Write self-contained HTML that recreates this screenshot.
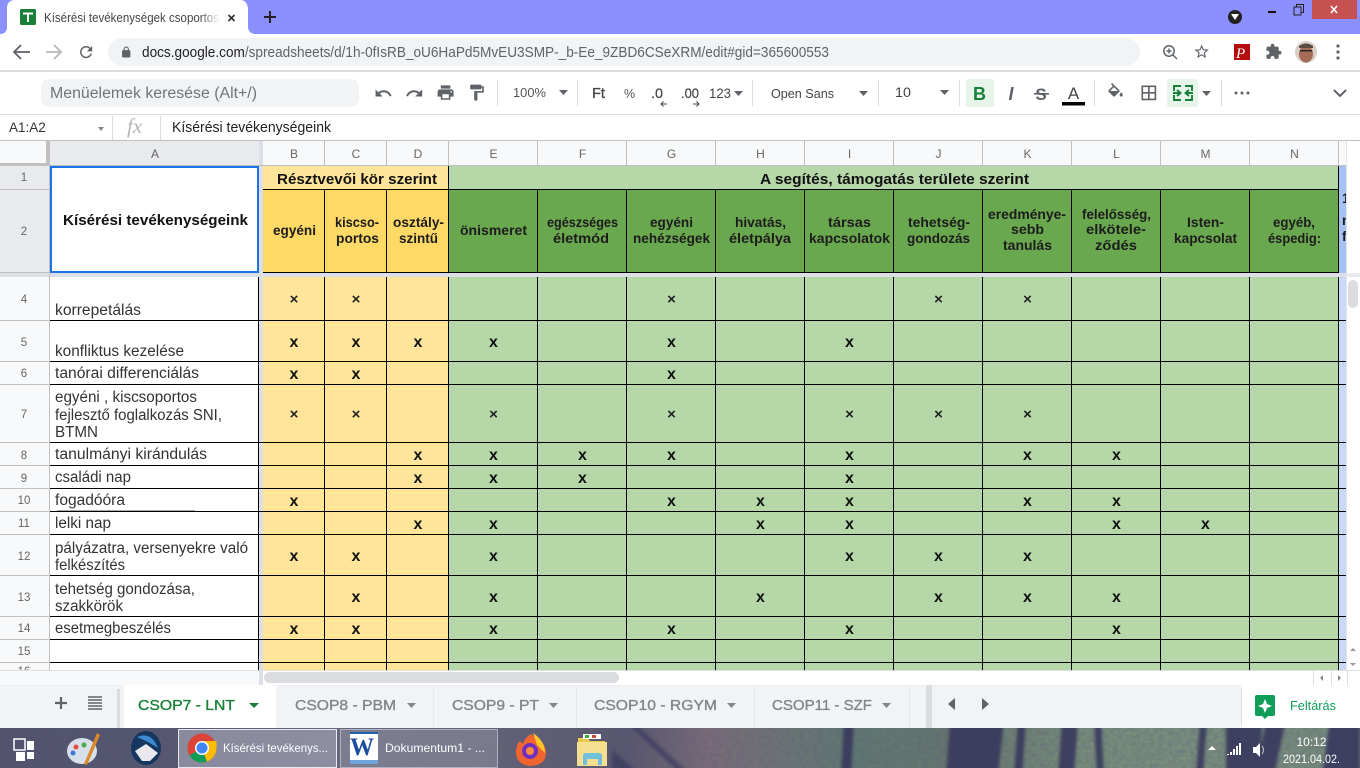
<!DOCTYPE html>
<html lang="hu"><head><meta charset="utf-8"><title>Kísérési tevékenységek csoportos</title>
<style>
html,body{margin:0;padding:0;width:1360px;height:768px;overflow:hidden;background:#fff}
svg{display:block;position:absolute;left:0;top:0}
text{font-family:"Liberation Sans",Arial,sans-serif}
.a{font-size:15.5px;fill:#333}
.h{font-size:13.5px;font-weight:bold;fill:#1c1c1c}
.t{font-size:15px;font-weight:bold;fill:#111}
.x{font-size:16px;font-weight:bold;fill:#111;text-anchor:middle}
.s{font-size:15px;font-weight:bold;fill:#222;text-anchor:middle}
.c{font-size:12px;fill:#666;text-anchor:middle}
.r{font-size:11.5px;fill:#666;text-anchor:middle}
.sh{font-size:15px;fill:#80868b;stroke:#80868b;stroke-width:.35px}
.w{fill:#fff;font-size:12px}
</style></head><body>
<svg width="1360" height="768" viewBox="0 0 1360 768" xmlns="http://www.w3.org/2000/svg">
<defs>
<linearGradient id="fade"><stop offset="0" stop-color="#fff" stop-opacity="0"/><stop offset="1" stop-color="#fff"/></linearGradient>
<linearGradient id="bg" x1="0" x2="1" y1="0" y2="0">
<stop offset="0" stop-color="#50516a"/><stop offset=".13" stop-color="#55566e"/><stop offset=".26" stop-color="#6a6c80"/><stop offset=".42" stop-color="#5e5c70"/><stop offset=".46" stop-color="#56556c"/><stop offset=".52" stop-color="#7b6c76"/><stop offset=".57" stop-color="#6f7574"/><stop offset=".62" stop-color="#5f7a70"/><stop offset=".7" stop-color="#64786c"/><stop offset=".8" stop-color="#78907a"/><stop offset=".88" stop-color="#7a917c"/><stop offset="1" stop-color="#758c7a"/>
</linearGradient>
<filter id="n" x="0" y="0" width="100%" height="100%"><feTurbulence type="fractalNoise" baseFrequency=".22 .28" numOctaves="2" seed="4"/><feColorMatrix values="0 0 0 0 .1 0 0 0 0 .1 0 0 0 0 .2 0 0 0 .6 -.12"/></filter>
<filter id="bl" x="-5%" y="-20%" width="110%" height="140%"><feGaussianBlur stdDeviation="1.600"/></filter>
<clipPath id="tk"><rect x="0" y="728" width="1360" height="40"/></clipPath>
</defs>
<rect width="1360" height="768" fill="#fff"/>
<!-- tab strip -->
<rect width="1360" height="34" fill="#8c90ff"/>
<path d="M0 34C5 34 7 31 7 27V8C7 3 10 0 15 0H240C245 0 247 3 248 8V27C248 31 251 34 256 34Z" fill="#fff"/>
<rect x="20" y="9" width="16" height="16" rx="1.500" fill="#188038"/>
<path d="M23 12.500H33V14.500H29V22H27V14.500H23Z" fill="#fff"/>
<text x="44" y="22" font-size="12.500" fill="#444" textLength="175" lengthAdjust="spacingAndGlyphs">Kísérési tevékenységek csoportos</text>
<rect x="200" y="8" width="20" height="20" fill="url(#fade)"/>
<path d="M228.500 19l6 6m0-6l-6 6" transform="translate(0,-4)" stroke="#333" stroke-width="1.700"/>
<path d="M270 11v12M264 17h12" stroke="#222" stroke-width="2"/>
<circle cx="1235" cy="17" r="7" fill="#222"/><path d="M1231 14h8l-4 6z" fill="#fff"/>
<rect x="1268" y="11" width="8" height="2" fill="#111"/>
<rect x="1294" y="7" width="7" height="8" fill="none" stroke="#222" stroke-width="1"/><path d="M1296.500 7V4.500H1303.500V12.500H1301.500" fill="none" stroke="#222" stroke-width="1"/>
<rect x="1312" y="0" width="45" height="19" fill="#c75050"/>
<path d="M1331 6l6 7m0-7l-6 7" stroke="#fff" stroke-width="1.600"/>
<!-- address row -->
<rect x="108" y="38" width="1032" height="28" rx="14" fill="#f1f3f4"/>
<path d="M30 52H14M21 45l-7 7 7 7" fill="none" stroke="#5f6368" stroke-width="1.800"/>
<path d="M46 52H61M54 45l7 7-7 7" fill="none" stroke="#b5b7ba" stroke-width="1.800"/>
<g transform="translate(77,43) scale(.76)"><path fill="#5f6368" d="M17.650 6.350C16.200 4.900 14.210 4 12 4c-4.420 0-7.990 3.580-7.990 8s3.570 8 7.990 8c3.730 0 6.840-2.550 7.730-6h-2.080c-.82 2.330-3.040 4-5.650 4-3.310 0-6-2.690-6-6s2.690-6 6-6c1.660 0 3.140.69 4.220 1.780L13 11h7V4l-2.350 2.350z"/></g>
<g transform="translate(120,46) scale(.52)"><path fill="#5f6368" d="M18 8h-1V6c0-2.760-2.240-5-5-5S7 3.240 7 6v2H6c-1.100 0-2 .9-2 2v10c0 1.100.9 2 2 2h12c1.100 0 2-.9 2-2V10c0-1.100-.9-2-2-2zM9 6c0-1.660 1.340-3 3-3s3 1.340 3 3v2H9V6z"/></g>
<text x="142" y="57" font-size="14.500" fill="#5f6368" textLength="687" lengthAdjust="spacingAndGlyphs"><tspan fill="#202124">docs.google.com</tspan>/spreadsheets/d/1h-0fIsRB_oU6HaPd5MvEU3SMP-_b-Ee_9ZBD6CSeXRM/edit#gid=365600553</text>
<circle cx="1169" cy="51" r="5.200" fill="none" stroke="#5f6368" stroke-width="1.500"/><path d="M1173 55l4 4M1166.500 51h5M1169 48.500v5" stroke="#5f6368" stroke-width="1.400"/>
<g transform="translate(1193,43) scale(.72)"><path fill="#5f6368" d="M22 9.240l-7.190-.62L12 2 9.190 8.630 2 9.240l5.460 4.730L5.820 21 12 17.270 18.180 21l-1.630-7.030L22 9.240zM12 15.400l-3.760 2.270 1-4.280-3.320-2.880 4.380-.38L12 6.100l1.710 4.040 4.380.38-3.320 2.880 1 4.280L12 15.400z"/></g>
<rect x="1234" y="44" width="16" height="16" fill="#b50d0d"/><text x="1236" y="58" font-size="15" font-style="italic" style="font-family:'Liberation Serif',serif" fill="#fff">P</text>
<g transform="translate(1265,43) scale(.72)"><path fill="#5f6368" d="M20.500 11H19V7c0-1.100-.9-2-2-2h-4V3.500C13 2.120 11.880 1 10.500 1S8 2.120 8 3.500V5H4c-1.100 0-1.990.9-1.990 2v3.800H3.500c1.490 0 2.700 1.210 2.700 2.700s-1.210 2.700-2.700 2.700H2V20c0 1.100.9 2 2 2h3.800v-1.500c0-1.490 1.210-2.700 2.700-2.700 1.490 0 2.700 1.210 2.700 2.700V22H17c1.100 0 2-.9 2-2v-4h1.500c1.380 0 2.500-1.120 2.500-2.500S21.880 11 20.500 11z"/></g>
<ellipse cx="1306" cy="52" rx="11" ry="11" fill="#d8cfc6"/><ellipse cx="1306" cy="54" rx="7" ry="8.500" fill="#a46c56"/><path d="M1299 46q7-5 14 0v2h-14z" fill="#5a4a44"/><rect x="1300" y="50" width="12" height="1.500" fill="#2a2a2a"/>
<circle cx="1338" cy="46" r="1.600" fill="#5f6368"/><circle cx="1338" cy="52" r="1.600" fill="#5f6368"/><circle cx="1338" cy="58" r="1.600" fill="#5f6368"/>
<rect y="70" width="1360" height="2" fill="#dcdce0"/>
<!-- toolbar -->
<rect x="41" y="79" width="318" height="28" rx="8" fill="#f1f3f4"/>
<text x="50" y="98" font-size="15.500" fill="#70757a" textLength="207" lengthAdjust="spacingAndGlyphs">Menüelemek keresése (Alt+/)</text>
<g fill="#5f6368">
<path transform="translate(374,84) scale(.78)" d="M12.500 8c-2.650 0-5.050.99-6.900 2.600L2 7v9h9l-3.620-3.620c1.390-1.160 3.160-1.880 5.120-1.880 3.540 0 6.550 2.310 7.600 5.500l2.370-.78C21.080 11.030 17.150 8 12.500 8z"/>
<path transform="translate(405,84) scale(.78)" d="M18.400 10.600C16.550 8.990 14.150 8 11.500 8c-4.650 0-8.580 3.030-9.960 7.220L3.900 16c1.050-3.190 4.050-5.500 7.600-5.500 1.950 0 3.730.72 5.120 1.880L13 16h9V7l-3.600 3.600z"/>
<path transform="translate(436,83) scale(.8)" d="M19 8H5c-1.660 0-3 1.340-3 3v6h4v4h12v-4h4v-6c0-1.660-1.340-3-3-3zm-3 11H8v-5h8v5zm3-7c-.55 0-1-.45-1-1s.45-1 1-1 1 .45 1 1-.45 1-1 1zm-1-9H6v4h12V3z"/>
<path transform="translate(467,83) scale(.8)" d="M18 4V3c0-.55-.45-1-1-1H5c-.55 0-1 .45-1 1v4c0 .55.45 1 1 1h12c.55 0 1-.45 1-1V6h1v4H9v11c0 .55.45 1 1 1h2c.55 0 1-.45 1-1v-9h8V4h-3z"/>
<path d="M559 90h9l-4.500 5zM859 91h9l-4.500 5zM940 90h9l-4.500 5zM1202 91h9l-4.500 5zM734 91h9l-4.500 5z"/>
</g>
<g fill="#dadce0"><rect x="497" y="80" width="1" height="26"/><rect x="577" y="80" width="1" height="26"/><rect x="752" y="80" width="1" height="26"/><rect x="878" y="80" width="1" height="26"/><rect x="959" y="80" width="1" height="26"/><rect x="1094" y="80" width="1" height="26"/><rect x="1221" y="80" width="1" height="26"/></g>
<text x="513" y="97" font-size="13" fill="#555" textLength="33" lengthAdjust="spacingAndGlyphs">100%</text>
<text x="592" y="98" font-size="14.500" fill="#444" stroke="#444" stroke-width=".3" textLength="13" lengthAdjust="spacingAndGlyphs">Ft</text>
<text x="624" y="98" font-size="12.500" fill="#555">%</text>
<text x="651" y="98" font-size="14" fill="#444" stroke="#444" stroke-width=".2" textLength="12" lengthAdjust="spacingAndGlyphs">.0</text>
<path d="M667 104h-6m2.500-2.500l-2.500 2.500 2.500 2.500" stroke="#444" fill="none"/>
<text x="681" y="98" font-size="14" fill="#444" stroke="#444" stroke-width=".2" textLength="18" lengthAdjust="spacingAndGlyphs">.00</text>
<path d="M693 104h6m-2.500-2.500l2.500 2.500-2.500 2.500" stroke="#444" fill="none"/>
<text x="709" y="98" font-size="13.500" fill="#444" textLength="22" lengthAdjust="spacingAndGlyphs">123</text>
<text x="771" y="98" font-size="13" fill="#444" textLength="63" lengthAdjust="spacingAndGlyphs">Open Sans</text>
<text x="895" y="97" font-size="13.500" fill="#444" textLength="16" lengthAdjust="spacingAndGlyphs">10</text>
<rect x="966" y="79" width="28" height="28" rx="2" fill="#e6f4ea"/>
<text x="979.500" y="100" font-size="18" font-weight="bold" fill="#188038" text-anchor="middle">B</text>
<text x="1011" y="100" font-size="18" font-weight="bold" font-style="italic" fill="#5f6368" text-anchor="middle">I</text>
<text x="1041" y="100" font-size="17" font-weight="bold" fill="#5f6368" text-anchor="middle">S</text><rect x="1034" y="93" width="15" height="1.600" fill="#5f6368"/>
<text x="1073.500" y="99" font-size="17" fill="#444" text-anchor="middle">A</text><rect x="1062" y="102" width="23" height="3.500" fill="#000"/>
<g transform="translate(1106,83) scale(.8)"><path fill="#5f6368" d="M16.560 8.940L7.620 0 6.210 1.410l2.380 2.380-5.150 5.150c-.59.59-.59 1.540 0 2.120l5.500 5.500c.29.29.68.44 1.060.44s.77-.15 1.060-.44l5.500-5.500c.59-.58.59-1.530 0-2.120zM5.210 10L10 5.210 14.790 10H5.210zM19 11.500s-2 2.170-2 3.500c0 1.100.9 2 2 2s2-.9 2-2c0-1.330-2-3.500-2-3.500z"/></g>
<g transform="translate(1139,83) scale(.82)"><path fill="#5f6368" d="M3 3v18h18V3H3zm8 16H5v-6h6v6zm0-8H5V5h6v6zm8 8h-6v-6h6v6zm0-8h-6V5h6v6z"/></g>
<rect x="1167" y="79" width="31" height="28" rx="2" fill="#e6f4ea"/>
<path d="M1174 91V86H1181M1185 86H1192V91M1174 95V100H1181M1185 100H1192V95M1173 93H1180M1177 90L1180.500 93 1177 96M1193 93H1186M1189 90L1185.500 93 1189 96" stroke="#188038" stroke-width="1.900" fill="none"/>
<circle cx="1236" cy="93" r="1.500" fill="#5f6368"/><circle cx="1242" cy="93" r="1.500" fill="#5f6368"/><circle cx="1248" cy="93" r="1.500" fill="#5f6368"/>
<path d="M1334 90l6 6 6-6" stroke="#5f6368" stroke-width="2" fill="none"/>
<rect y="114" width="1360" height="1" fill="#dadce0"/>
<!-- formula bar -->
<text x="9" y="132" font-size="13.500" fill="#333">A1:A2</text>
<path d="M98 127h6l-3 4z" fill="#888"/>
<rect x="112" y="116" width="1" height="24" fill="#dadce0"/><rect x="160" y="116" width="1" height="24" fill="#dadce0"/>
<text x="127" y="133" font-size="21" font-style="italic" fill="#b5b5b5" style="font-family:'Liberation Serif',serif">fx</text>
<text x="172" y="132" font-size="14.500" fill="#222" textLength="159" lengthAdjust="spacingAndGlyphs">Kísérési tevékenységeink</text>
<rect y="140" width="1360" height="1" fill="#c0c0c0"/>
<!-- headers bg -->
<rect y="141" width="1346" height="25" fill="#f8f9fa"/>
<rect y="166" width="50" height="504" fill="#f8f9fa"/>
<rect x="50" y="141" width="209" height="25" fill="#e8eaed"/>
<rect y="166" width="50" height="107" fill="#e8eaed"/>
<rect x="0" y="141" width="46" height="22" fill="#f8f9fa"/>
<rect x="0" y="163" width="50" height="3" fill="#c0c0c0"/><rect x="46" y="141" width="4" height="25" fill="#c0c0c0"/>
<!-- main fills -->
<rect x="50" y="166" width="209" height="504" fill="#fff"/>
<rect x="263" y="166" width="186" height="24" fill="#ffe599"/>
<rect x="449" y="166" width="890" height="24" fill="#b6d7a8"/>
<rect x="263" y="190" width="186" height="83" fill="#ffd966"/>
<rect x="449" y="190" width="890" height="83" fill="#6aa84f"/>
<rect x="263" y="277" width="186" height="393" fill="#ffe599"/>
<rect x="449" y="277" width="890" height="393" fill="#b6d7a8"/>
<rect x="1339" y="166" width="7" height="107" fill="#a4c2f4"/>
<rect x="1339" y="277" width="7" height="393" fill="#c9daf8"/>
<!-- freeze bars -->
<rect x="259" y="141" width="4" height="529" fill="#dcdfe6"/>
<rect y="273" width="1346" height="4" fill="#dcdfe6"/>
<!-- header grid -->
<g fill="#c0c0c0">
<rect x="324" y="141" width="1" height="25"/><rect x="386" y="141" width="1" height="25"/><rect x="448" y="141" width="1" height="25"/><rect x="537" y="141" width="1" height="25"/><rect x="626" y="141" width="1" height="25"/><rect x="715" y="141" width="1" height="25"/><rect x="804" y="141" width="1" height="25"/><rect x="893" y="141" width="1" height="25"/><rect x="982" y="141" width="1" height="25"/><rect x="1071" y="141" width="1" height="25"/><rect x="1160" y="141" width="1" height="25"/><rect x="1249" y="141" width="1" height="25"/><rect x="1338" y="141" width="1" height="25"/>
<rect y="165" width="1296" height="1" x="50"/>
<rect x="0" y="189" width="50" height="1"/><rect x="0" y="272" width="50" height="1"/><rect x="0" y="320" width="50" height="1"/><rect x="0" y="361" width="50" height="1"/><rect x="0" y="384" width="50" height="1"/><rect x="0" y="442" width="50" height="1"/><rect x="0" y="465" width="50" height="1"/><rect x="0" y="488" width="50" height="1"/><rect x="0" y="511" width="50" height="1"/><rect x="0" y="534" width="50" height="1"/><rect x="0" y="575" width="50" height="1"/><rect x="0" y="616" width="50" height="1"/><rect x="0" y="639" width="50" height="1"/><rect x="0" y="662" width="50" height="1"/>
<rect x="49" y="166" width="1" height="504"/>
</g>
<text class="c" x="155" y="158">A</text><text class="c" x="294" y="158">B</text><text class="c" x="356" y="158">C</text><text class="c" x="418" y="158">D</text><text class="c" x="493.500" y="158">E</text><text class="c" x="582.500" y="158">F</text><text class="c" x="671.500" y="158">G</text><text class="c" x="760.500" y="158">H</text><text class="c" x="849.500" y="158">I</text><text class="c" x="938.500" y="158">J</text><text class="c" x="1027.500" y="158">K</text><text class="c" x="1116.500" y="158">L</text><text class="c" x="1205.500" y="158">M</text><text class="c" x="1294.500" y="158">N</text>
<text class="r" x="24" y="181">1</text><text class="r" x="24" y="235">2</text><text class="r" x="24" y="303">4</text><text class="r" x="24" y="346">5</text><text class="r" x="24" y="377">6</text><text class="r" x="24" y="418">7</text><text class="r" x="24" y="459">8</text><text class="r" x="24" y="482">9</text><text class="r" x="24" y="504">10</text><text class="r" x="24" y="527">11</text><text class="r" x="24" y="560">12</text><text class="r" x="24" y="601">13</text><text class="r" x="24" y="632">14</text><text class="r" x="24" y="655">15</text><text class="r" x="24" y="675">16</text>
<!-- grid lines -->
<g fill="#000">
<rect x="50" y="320" width="1296" height="1"/><rect x="50" y="361" width="1296" height="1"/><rect x="50" y="384" width="1296" height="1"/><rect x="50" y="442" width="1296" height="1"/><rect x="50" y="465" width="1296" height="1"/><rect x="50" y="488" width="1296" height="1"/><rect x="50" y="511" width="1296" height="1"/><rect x="50" y="534" width="1296" height="1"/><rect x="50" y="575" width="1296" height="1"/><rect x="50" y="616" width="1296" height="1"/><rect x="50" y="639" width="1296" height="1"/><rect x="50" y="662" width="1296" height="1"/>
<rect x="263" y="189" width="1076" height="1"/><rect x="263" y="272" width="1076" height="1"/>
<rect x="258" y="277" width="1" height="393"/>
<rect x="324" y="190" width="1" height="83"/><rect x="386" y="190" width="1" height="83"/><rect x="448" y="166" width="1" height="107"/><rect x="537" y="190" width="1" height="83"/><rect x="626" y="190" width="1" height="83"/><rect x="715" y="190" width="1" height="83"/><rect x="804" y="190" width="1" height="83"/><rect x="893" y="190" width="1" height="83"/><rect x="982" y="190" width="1" height="83"/><rect x="1071" y="190" width="1" height="83"/><rect x="1160" y="190" width="1" height="83"/><rect x="1249" y="190" width="1" height="83"/><rect x="1338" y="166" width="1" height="107"/>
<rect x="324" y="277" width="1" height="393"/><rect x="386" y="277" width="1" height="393"/><rect x="448" y="277" width="1" height="393"/><rect x="537" y="277" width="1" height="393"/><rect x="626" y="277" width="1" height="393"/><rect x="715" y="277" width="1" height="393"/><rect x="804" y="277" width="1" height="393"/><rect x="893" y="277" width="1" height="393"/><rect x="982" y="277" width="1" height="393"/><rect x="1071" y="277" width="1" height="393"/><rect x="1160" y="277" width="1" height="393"/><rect x="1249" y="277" width="1" height="393"/><rect x="1338" y="277" width="1" height="393"/>
</g>
<rect x="57" y="510" width="138" height="1" fill="#aaa"/>
<!-- selection -->
<rect x="51" y="167" width="207" height="105" fill="#fff" stroke="#1a73e8" stroke-width="2"/>
<!-- titles -->
<text class="t" x="63" y="225" textLength="185" lengthAdjust="spacingAndGlyphs">Kísérési tevékenységeink</text>
<text class="t" x="277" y="184" textLength="160" lengthAdjust="spacingAndGlyphs">Résztvevői kör szerint</text>
<text class="t" x="760" y="184" textLength="269" lengthAdjust="spacingAndGlyphs">A segítés, támogatás területe szerint</text>
<!-- column headers -->
<text class="h" x="273" y="235" lengthAdjust="spacingAndGlyphs" textLength="43">egyéni</text>
<text class="h" x="335" y="227" lengthAdjust="spacingAndGlyphs" textLength="44">kiscso-</text><text class="h" x="336" y="243" lengthAdjust="spacingAndGlyphs" textLength="43">portos</text>
<text class="h" x="393" y="227" lengthAdjust="spacingAndGlyphs" textLength="51">osztály-</text><text class="h" x="399" y="243" lengthAdjust="spacingAndGlyphs" textLength="39">szintű</text>
<text class="h" x="460" y="235" lengthAdjust="spacingAndGlyphs" textLength="67">önismeret</text>
<text class="h" x="547" y="227" lengthAdjust="spacingAndGlyphs" textLength="71">egészséges</text><text class="h" x="553" y="243" lengthAdjust="spacingAndGlyphs" textLength="56">életmód</text>
<text class="h" x="650" y="227" lengthAdjust="spacingAndGlyphs" textLength="43">egyéni</text><text class="h" x="633" y="243" lengthAdjust="spacingAndGlyphs" textLength="77">nehézségek</text>
<text class="h" x="735" y="227" lengthAdjust="spacingAndGlyphs" textLength="51">hivatás,</text><text class="h" x="729" y="243" lengthAdjust="spacingAndGlyphs" textLength="62">életpálya</text>
<text class="h" x="828" y="227" lengthAdjust="spacingAndGlyphs" textLength="43">társas</text><text class="h" x="809" y="243" lengthAdjust="spacingAndGlyphs" textLength="81">kapcsolatok</text>
<text class="h" x="908" y="227" lengthAdjust="spacingAndGlyphs" textLength="62">tehetség-</text><text class="h" x="907" y="243" lengthAdjust="spacingAndGlyphs" textLength="63">gondozás</text>
<text class="h" x="988" y="219" lengthAdjust="spacingAndGlyphs" textLength="78">eredménye-</text><text class="h" x="1011" y="234" lengthAdjust="spacingAndGlyphs" textLength="33">sebb</text><text class="h" x="1003" y="250" lengthAdjust="spacingAndGlyphs" textLength="49">tanulás</text>
<text class="h" x="1082" y="219" lengthAdjust="spacingAndGlyphs" textLength="69">felelősség,</text><text class="h" x="1086" y="234" lengthAdjust="spacingAndGlyphs" textLength="60">elkötele-</text><text class="h" x="1095" y="250" lengthAdjust="spacingAndGlyphs" textLength="42">ződés</text>
<text class="h" x="1187" y="227" lengthAdjust="spacingAndGlyphs" textLength="37">Isten-</text><text class="h" x="1174" y="243" lengthAdjust="spacingAndGlyphs" textLength="63">kapcsolat</text>
<text class="h" x="1273" y="227" lengthAdjust="spacingAndGlyphs" textLength="42">egyéb,</text><text class="h" x="1268" y="243" lengthAdjust="spacingAndGlyphs" textLength="53">éspedig:</text>
<text class="h" x="1342" y="203">1</text><text class="h" x="1342" y="225">n</text><text class="h" x="1342" y="241">f</text>
<!-- col A labels -->
<text class="a" x="55" y="315" lengthAdjust="spacingAndGlyphs" textLength="86">korrepetálás</text>
<text class="a" x="55" y="356" lengthAdjust="spacingAndGlyphs" textLength="129">konfliktus kezelése</text>
<text class="a" x="55" y="378" lengthAdjust="spacingAndGlyphs" textLength="144">tanórai differenciálás</text>
<text class="a" x="55" y="402" lengthAdjust="spacingAndGlyphs" textLength="142">egyéni , kiscsoportos</text>
<text class="a" x="55" y="420" lengthAdjust="spacingAndGlyphs" textLength="167">fejlesztő foglalkozás SNI,</text>
<text class="a" x="55" y="437" lengthAdjust="spacingAndGlyphs" textLength="43">BTMN</text>
<text class="a" x="55" y="459" lengthAdjust="spacingAndGlyphs" textLength="152">tanulmányi kirándulás</text>
<text class="a" x="55" y="482" lengthAdjust="spacingAndGlyphs" textLength="76">családi nap</text>
<text class="a" x="55" y="505" lengthAdjust="spacingAndGlyphs" textLength="70">fogadóóra</text>
<text class="a" x="55" y="528" lengthAdjust="spacingAndGlyphs" textLength="56">lelki nap</text>
<text class="a" x="55" y="553" lengthAdjust="spacingAndGlyphs" textLength="193">pályázatra, versenyekre való</text>
<text class="a" x="55" y="570" lengthAdjust="spacingAndGlyphs" textLength="70">felkészítés</text>
<text class="a" x="55" y="594" lengthAdjust="spacingAndGlyphs" textLength="140">tehetség gondozása,</text>
<text class="a" x="55" y="611" lengthAdjust="spacingAndGlyphs" textLength="68">szakkörök</text>
<text class="a" x="55" y="633" lengthAdjust="spacingAndGlyphs" textLength="116">esetmegbeszélés</text>
<!-- marks -->
<text class="s" x="294 356 671.500 938.500 1027.500" y="304">×××××</text>
<text class="x" x="294 356 418 493.500 671.500 849.500" y="347">xxxxxx</text>
<text class="x" x="294 356 671.500" y="379">xxx</text>
<text class="s" x="294 356 493.500 671.500 849.500 938.500 1027.500" y="419">×××××××</text>
<text class="x" x="418 493.500 582.500 671.500 849.500 1027.500 1116.500" y="460">xxxxxxx</text>
<text class="x" x="418 493.500 582.500 849.500" y="483">xxxx</text>
<text class="x" x="294 671.500 760.500 849.500 1027.500 1116.500" y="506">xxxxxx</text>
<text class="x" x="418 493.500 760.500 849.500 1116.500 1205.500" y="529">xxxxxx</text>
<text class="x" x="294 356 493.500 849.500 938.500 1027.500" y="561">xxxxxx</text>
<text class="x" x="356 493.500 760.500 938.500 1027.500 1116.500" y="602">xxxxxx</text>
<text class="x" x="294 356 493.500 671.500 849.500 1116.500" y="634">xxxxxx</text>
<!-- v scrollbar -->
<rect x="1346" y="141" width="14" height="529" fill="#fff"/><rect x="1346" y="141" width="1" height="529" fill="#e4e4e4"/>
<rect x="1346" y="273" width="14" height="4" fill="#e8eaed"/>
<rect x="1348" y="280" width="10" height="28" rx="5" fill="#dadce0"/>
<path d="M1350 651l3-3 3 3zM1350 663l3 3 3-3z" fill="#999"/>
<!-- h scrollbar -->
<rect x="0" y="670" width="1360" height="15" fill="#fff"/><rect y="670" width="1360" height="1" fill="#e0e0e0"/>
<rect x="0" y="671" width="259" height="14" fill="#f8f9fa"/>
<rect x="259" y="671" width="4" height="14" fill="#dcdfe6"/>
<rect x="264" y="672" width="355" height="11" rx="5.500" fill="#dadce0"/>
<rect x="1313" y="671" width="1" height="14" fill="#e0e0e0"/><rect x="1331" y="671" width="1" height="14" fill="#e0e0e0"/><rect x="1347" y="671" width="1" height="14" fill="#e0e0e0"/>
<path d="M1323 675l-3 3 3 3zM1338 675l3 3-3 3z" fill="#888"/>
<!-- sheet bar -->
<rect y="685" width="1360" height="43" fill="#f1f3f4"/>
<rect y="685" width="1360" height="1" fill="#eceef0"/>
<rect x="117" y="689" width="3" height="39" fill="#dadce0"/>
<rect x="124" y="685" width="152" height="43" fill="#fff"/>
<path d="M61 697v12M55 703h12" stroke="#5f6368" stroke-width="2.200"/>
<path d="M88 697h14M88 700h14M88 703h14M88 706h14M88 709h14" stroke="#5f6368" stroke-width="1.500"/>
<text x="138" y="710" font-size="15" fill="#188038" stroke="#188038" stroke-width=".35" textLength="97" lengthAdjust="spacingAndGlyphs">CSOP7 - LNT</text>
<path d="M249 703h10l-5 5z" fill="#188038"/>
<text class="sh" x="295" y="710" textLength="101" lengthAdjust="spacingAndGlyphs">CSOP8 - PBM</text>
<path d="M407 703h9l-4.500 5z" fill="#80868b"/>
<rect x="433" y="686" width="1" height="42" fill="#e6e8ea"/>
<text class="sh" x="452" y="710" textLength="87" lengthAdjust="spacingAndGlyphs">CSOP9 - PT</text>
<path d="M549 703h9l-4.500 5z" fill="#80868b"/>
<rect x="576" y="686" width="1" height="42" fill="#e6e8ea"/>
<text class="sh" x="594" y="710" textLength="123" lengthAdjust="spacingAndGlyphs">CSOP10 - RGYM</text>
<path d="M727 703h9l-4.500 5z" fill="#80868b"/>
<rect x="754" y="686" width="1" height="42" fill="#e6e8ea"/>
<text class="sh" x="772" y="710" textLength="100" lengthAdjust="spacingAndGlyphs">CSOP11 - SZF</text>
<path d="M882 703h9l-4.500 5z" fill="#80868b"/>
<rect x="909" y="686" width="1" height="42" fill="#e6e8ea"/>
<rect x="926" y="685" width="6" height="43" fill="#dadce0"/>
<path d="M955 698l-7 6 7 6zM982 698l7 6-7 6z" fill="#5f6368"/>
<rect x="1242" y="685" width="118" height="43" fill="#fff"/><rect x="1241" y="689" width="1" height="36" fill="#dadce0"/>
<path d="M1255 697q0-2 2-2h16q2 0 2 2v17q0 2-2 2h-5l-3 3-3-3h-5q-2 0-2-2z" fill="#0f9d58"/>
<path d="M1265 699l2 5 5 2-5 2-2 5-2-5-5-2 5-2z" fill="#fff"/>
<text x="1290" y="710" font-size="13" fill="#0f9d58" textLength="46" lengthAdjust="spacingAndGlyphs">Feltárás</text>
<!-- taskbar -->
<rect y="728" width="1360" height="40" fill="url(#bg)"/>
<rect y="728" width="1360" height="40" filter="url(#n)"/>
<g clip-path="url(#tk)"><g filter="url(#bl)">
<path d="M624 720h7l61 56h-9zM612 750l30 26h-30z" fill="#37385c" opacity=".7"/>
<path d="M950 720h54l-6 56h-52zM844 720h10l-3 56h-10zM1018 720h8l-4 56h-8zM1062 720h16l-4 56h-16zM1094 720h7l3 56h-7zM1200 720h7l-4 56h-7zM1226 720h36l-2 56h-34zM1266 720h20l-12 56h-18zM1330 720h30v56h-38z" fill="#37385c" opacity=".9"/>
</g></g>
<rect x="14" y="739" width="11" height="11" fill="none" stroke="#fff" stroke-width="1.500"/><rect x="27" y="741" width="7" height="9" fill="#fff"/><rect x="16" y="752" width="9" height="9" fill="#fff"/><rect x="27" y="752" width="7" height="7" fill="#fff"/>
<ellipse cx="82" cy="751" rx="15" ry="13" fill="#d7e0ea"/><circle cx="76" cy="747" r="2.500" fill="#e94b3c"/><circle cx="84" cy="745" r="2.500" fill="#4aa84f"/><circle cx="73" cy="753" r="2.500" fill="#3c78d8"/><path d="M97 733l-13 31 3 1 13-30z" fill="#d98a2b"/>
<ellipse cx="146" cy="748" rx="15" ry="17" fill="#16365f"/><path d="M135 751l11-7 12 9-8 8h-8z" fill="#e8e8ee"/><path d="M137 737q14-6 21 11l-10-6z" fill="#3a8ad0"/>
<rect x="178.500" y="729.500" width="158" height="38" fill="#9a9bad" fill-opacity=".75" stroke="#e8e8ee"/>
<rect x="340.500" y="729.500" width="157" height="38" fill="#8a8b9d" fill-opacity=".6" stroke="#b0b1c0"/>
<circle cx="202" cy="748" r="14.500" fill="#db4437"/><path d="M202 748L189.500 755.500A14.500 14.500 0 0 0 207 761.600Z" fill="#0f9d58"/><path d="M202 748L207 761.600A14.500 14.500 0 0 0 216.500 748V741H202Z" fill="#fbbc05"/><circle cx="202" cy="748" r="7" fill="#fff"/><circle cx="202" cy="748" r="5.500" fill="#4285f4"/>
<text class="w" x="223" y="752" textLength="105" lengthAdjust="spacingAndGlyphs">Kísérési tevékenys...</text>
<rect x="350" y="732" width="28" height="32" fill="#fff"/><rect x="350" y="732" width="28" height="2" fill="#1e5fb0"/><rect x="350" y="760" width="28" height="4" fill="#6fa3dc"/>
<text x="350" y="755" font-size="25" font-weight="bold" fill="#1b4f9e" style="font-family:'Liberation Serif',serif" textLength="24" lengthAdjust="spacingAndGlyphs">W</text>
<text class="w" x="385" y="752" textLength="100" lengthAdjust="spacingAndGlyphs">Dokumentum1 - ...</text>
<path d="M531 734q3 3 6 4 9 6 9 15 0 12-15 13-15-1-15-14 0-8 4-11l3 3q1-6 8-10z" fill="#f0652f"/><path d="M533 733q12 8 12 20l-8-8z" fill="#ffc629"/><circle cx="530" cy="751" r="8" fill="#6f2fc0"/><circle cx="530" cy="751" r="4" fill="#ff8a3c"/>
<path d="M578 738h10l2 3h15v25h-27z" fill="#e8c84f"/><rect x="577" y="742" width="30" height="24" fill="#f4df8e"/><rect x="583" y="734" width="18" height="5" fill="#fff"/><rect x="585" y="735" width="4" height="3" fill="#3aa83a"/><rect x="592" y="735" width="4" height="3" fill="#d04a3a"/><path d="M583 765v-9q0-3 3-3h13q3 0 3 3v9h-4v-6h-11v6z" fill="#6fc0dc"/>
<path d="M1208 750l4-4 4 4z" fill="#fff"/>
<path d="M1227 754h2v1h-2zM1230 752h2v3h-2zM1233 749h2v6h-2zM1236 746h2v9h-2zM1239 743h2v12h-2z" fill="#fff"/>
<path d="M1253 747h3l4-4v14l-4-4h-3z" fill="#fff"/><path d="M1262 746q3 4 0 8" stroke="#ccc" fill="none"/>
<text x="1311.500" y="746" font-size="12" fill="#fff" text-anchor="middle">10:12</text>
<text x="1311.500" y="763" font-size="12" fill="#fff" text-anchor="middle" textLength="57" lengthAdjust="spacingAndGlyphs">2021.04.02.</text>
</svg>
</body></html>
